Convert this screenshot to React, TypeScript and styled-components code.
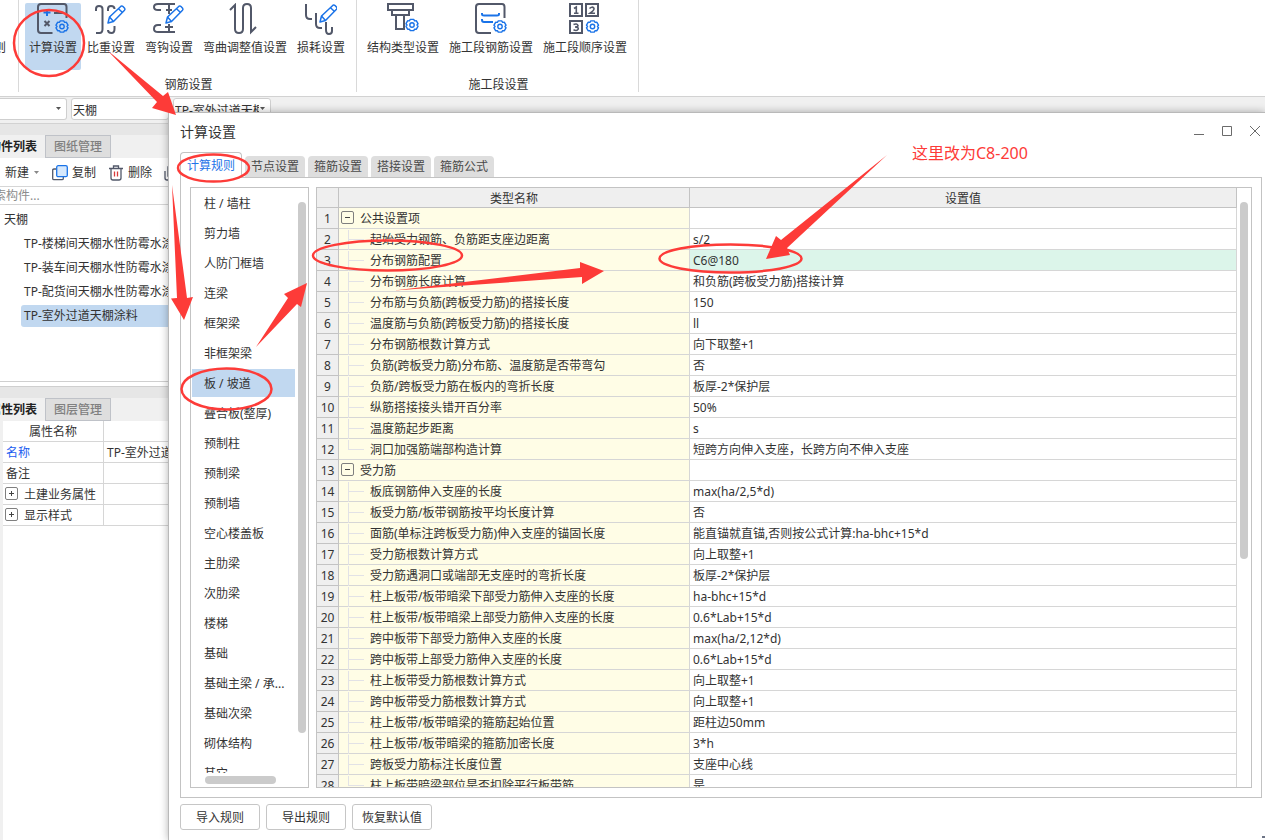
import React from "react";
import styled, { createGlobalStyle, css } from "styled-components";

const RED = "#fd3b38";
const INK = "#333333";
const LINE = "#c3c3c3";
const SOFT = "#d6d6d6";
const PICK = "#c1d8f0";

const Global = createGlobalStyle`
  * { box-sizing: border-box; }
  body { margin: 0; overflow: hidden; }
  body, button, input, select, table {
    font-family: "Noto Sans", "Noto Sans CJK SC", sans-serif;
    font-size: 12px;
    line-height: 20px;
    color: ${INK};
  }
  button { border: 0; padding: 0; margin: 0; background: none; white-space: nowrap; }
`;

const Page = styled.div`
  position: relative;
  height: 100vh;
  display: flex;
  flex-direction: column;
  overflow: hidden;
  background: #fff;
`;

/* ---------- ribbon ---------- */
const Ribbon = styled.header`
  display: flex;
  flex: none;
  height: 97px;
  padding-bottom: 4px;
  border-bottom: 1px solid #d2d2d2;
`;
const RibbonEdge = styled.div`
  display: flex;
  justify-content: flex-end;
  width: 19px;
  padding: 38px 12px 0 0;
  border-right: 1px solid #d9d9d9;
  white-space: nowrap;
`;
const Group = styled.section`
  display: flex;
  flex-direction: column;
  padding: 3px 7px 0 6px;
  border-right: 1px solid #d9d9d9;
`;
const GroupTools = styled.div`
  display: flex;
  gap: 2px;
`;
const Tool = styled.button<{ $on?: boolean }>`
  display: flex;
  flex-direction: column;
  align-items: center;
  height: 67px;
  padding: 0 4px;
  gap: 3px;
  border-radius: 2px;
  background: ${(p) => (p.$on ? PICK : "transparent")};
`;
const GroupTitle = styled.div`
  padding: 5px 0 0 3px;
  text-align: center;
`;

/* ---------- combo bar ---------- */
const ComboBar = styled.div`
  display: flex;
  flex: none;
  gap: 4px;
  height: 27px;
  padding-top: 1px;
  background: #f0f0f0;
  border-bottom: 1px solid #d2d2d2;
`;
const ComboBox = styled.label<{ $w: number; $first?: boolean }>`
  display: flex;
  align-items: center;
  width: ${(p) => p.$w}px;
  height: 22px;
  padding-right: 4px;
  background: #fff;
  border: 1px solid #cfcfcf;
  border-left-width: ${(p) => (p.$first ? 0 : 1)}px;
  border-radius: ${(p) => (p.$first ? "0 3px 3px 0" : "3px")};
`;
const ComboSelect = styled.select`
  flex: 1;
  min-width: 0;
  height: 20px;
  padding: 2px 0 0 1px;
  appearance: none;
  border: 0;
  background: none;
`;

/* ---------- left dock ---------- */
const Dock = styled.aside`
  display: flex;
  flex: 1;
  flex-direction: column;
  width: 170px;
  min-height: 0;
  overflow: hidden;
`;
const Band = styled.div`
  flex: none;
  height: 11px;
  background: #e6e6e6;
`;
const DockTabs = styled.div`
  display: flex;
  flex: none;
  height: 23px;
  background: #f0f0f0;
`;
const DockTab = styled.button<{ $on?: boolean }>`
  display: flex;
  justify-content: flex-end;
  align-items: center;
  overflow: hidden;
  width: ${(p) => (p.$on ? 45 : 66)}px;
  padding-right: 8px;
  font-weight: ${(p) => (p.$on ? 700 : 500)};
  color: ${(p) => (p.$on ? "#222" : "#808080")};
  background: ${(p) => (p.$on ? "#f0f0f0" : "#dedede")};
  ${(p) =>
    !p.$on &&
    css`
      border: 1px solid #bfc2c8;
    `}
`;
const DockTools = styled.div`
  display: flex;
  flex: none;
  align-items: center;
  height: 29px;
  padding: 2px 0 0 5px;
  border-bottom: 1px solid ${SOFT};
`;
const DockTool = styled.button`
  display: flex;
  flex: none;
  align-items: center;
  gap: 4px;
  margin-right: 12px;
`;
const Search = styled.input`
  flex: none;
  height: 18px;
  padding: 1px 0 0;
  border: 0;
  border-bottom: 1px solid ${SOFT};
  text-indent: -18px;
  &::placeholder { color: #8c8c8c; opacity: 1; }
`;
const Tree = styled.ul`
  flex: none;
  height: 177px;
  margin: 0;
  padding: 4px 0 0;
  list-style: none;
  white-space: nowrap;
  border-bottom: 1px solid #cfcfcf;
`;
const TreeRoot = styled.li`
  padding: 1px 0 3px 4px;
`;
const TreeLeaf = styled.li<{ $on?: boolean }>`
  height: 22px;
  margin: 0 0 2px 21px;
  padding: 0 3px;
  line-height: 22px;
  border-radius: 3px 0 0 3px;
  background: ${(p) => (p.$on ? PICK : "transparent")};
`;
const DockGap = styled.div`
  flex: none;
  height: 5px;
  border-bottom: 1px solid #cfcfcf;
`;
const PropsArea = styled.div`
  flex: 1;
  border-left: 3px solid #f0f0f0;
  overflow: hidden;
`;
const PropsTable = styled.table`
  width: 100%;
  table-layout: fixed;
  border-spacing: 0;
  line-height: 19px;
  td, th {
    height: 21px;
    padding: 1px 0 0 3px;
    font-weight: 400;
    overflow: hidden;
    white-space: nowrap;
    border-bottom: 1px solid ${SOFT};
    border-right: 1px solid ${SOFT};
  }
  th { padding-left: 0; }
`;
const NameCol = styled.col`
  width: 101px;
`;
const Link = styled.span`
  color: #1a5cf0;
`;
const Expandable = styled.div`
  display: flex;
  align-items: center;
  gap: 6px;
  height: 19px;
  margin-left: -1px;
`;
const Toggle = styled.button`
  display: flex;
  flex: none;
  width: 13px;
  height: 13px;
  margin-bottom: 2px;
  border: 1px solid #7f7f7f;
  border-radius: 2px;
`;

/* ---------- dialog ---------- */
const Dialog = styled.section`
  position: absolute;
  isolation: isolate;
  inset: 112px 0 0 168px;
  display: flex;
  flex-direction: column;
  padding: 0 3px 10px 11px;
  background: #fff;
  border: solid #b9b9b9;
  border-width: 1px 0 0 1px;
  box-shadow: 0 0 8px rgba(0, 0, 0, 0.3);
`;
const TitleBar = styled.div`
  display: flex;
  flex: none;
  justify-content: space-between;
  height: 39px;
`;
const Title = styled.h1`
  margin: 0;
  padding-top: 9px;
  font-size: 14px;
  font-weight: 400;
`;
const WindowButtons = styled.div`
  display: flex;
  gap: 16px;
  padding: 12px 1px 0 0;
`;
const WindowButton = styled.button`
  width: 12px;
  height: 12px;
`;
const Tabs = styled.div`
  display: flex;
  flex: none;
  align-items: flex-end;
  gap: 3px;
  height: 25px;
`;
const Tab = styled.button<{ $on?: boolean }>`
  position: relative;
  width: ${(p) => (p.$on ? 62 : 60)}px;
  height: ${(p) => (p.$on ? 26 : 21)}px;
  margin-bottom: ${(p) => (p.$on ? -1 : 0)}px;
  border-radius: 4px 4px 0 0;
  color: ${(p) => (p.$on ? "#1f74e8" : "#4a4a4a")};
  background: ${(p) => (p.$on ? "#fff" : "#dedede")};
  ${(p) =>
    p.$on &&
    css`
      z-index: 1;
      border: 1px solid ${LINE};
      border-bottom: 0;
    `}
`;
const Panel = styled.div`
  display: flex;
  flex: 1;
  gap: 7px;
  min-height: 0;
  padding: 9px;
  border: 1px solid ${LINE};
`;
const ListBox = styled.nav`
  display: grid;
  grid-template-columns: 1fr 13px;
  grid-template-rows: 1fr 14px;
  flex: none;
  width: 119px;
  border: 1px solid ${LINE};
`;
const List = styled.div`
  min-height: 0;
  overflow: hidden;
  padding: 1px 0 0 1px;
`;
const ListItem = styled.button<{ $on?: boolean }>`
  display: block;
  width: 100%;
  height: 28px;
  margin-bottom: 2px;
  padding: 2px 0 0 12px;
  text-align: left;
  background: ${(p) => (p.$on ? PICK : "transparent")};
`;
const Track = styled.div`
  flex: none;
  padding: 14px 0 0 3px;
`;
const GridTrack = styled(Track)`
  width: 14px;
`;
const Thumb = styled.div<{ $h: number }>`
  width: 8px;
  height: ${(p) => p.$h}%;
  border-radius: 4px;
  background: #cbcbcb;
`;
const TrackAcross = styled.div`
  padding: 3px 0 3px 14px;
`;
const ThumbAcross = styled.div`
  width: 71px;
  height: 8px;
  border-radius: 4px;
  background: #cbcbcb;
`;
const GridBox = styled.div`
  display: flex;
  flex: 1;
  min-width: 0;
  overflow: hidden;
  border: 1px solid ${LINE};
`;
const GridView = styled.div`
  flex: 1;
  min-width: 0;
  overflow: hidden;
`;
const Grid = styled.table`
  width: 100%;
  table-layout: fixed;
  border-spacing: 0;
  line-height: 19px;
`;
const Col = styled.col<{ $w?: number }>`
  width: ${(p) => (p.$w ? p.$w + "px" : "auto")};
`;
const HeadCell = styled.th`
  height: 20px;
  padding: 2px 0 0;
  line-height: 17px;
  font-weight: 400;
  background: #efefef;
  border: solid ${LINE};
  border-width: 0 1px 1px 0;
`;
const NumCell = styled.th`
  height: 21px;
  padding: 1px 0 0;
  font-weight: 400;
  background: #efefef;
  border: solid ${LINE};
  border-width: 0 1px 1px 0;
`;
const NameCell = styled.td`
  height: 21px;
  padding: 0;
  white-space: nowrap;
  background: #fffde6;
  border: solid ${SOFT};
  border-width: 0 1px 1px 0;
`;
const ValueCell = styled.td<{ $on?: boolean }>`
  height: 21px;
  padding: 1px 0 0 3px;
  white-space: nowrap;
  background: ${(p) => (p.$on ? "#dcf5ea" : "#fff")};
  border: solid ${SOFT};
  border-width: 0 1px 1px 0;
`;
const NameLine = styled.div<{ $child?: boolean }>`
  display: flex;
  align-items: center;
  gap: 6px;
  height: 20px;
  padding: 1px 0 0 ${(p) => (p.$child ? 9 : 2)}px;
`;
const Branch = styled.span<{ $last?: boolean }>`
  width: 16px;
  height: 20px;
  background:
    linear-gradient(#e2e2e6, #e2e2e6) 0 0 / 1px ${(p) => (p.$last ? "50%" : "100%")} no-repeat,
    linear-gradient(#e2e2e6, #e2e2e6) 0 9px / 100% 1px no-repeat;
`;
const Actions = styled.footer`
  display: flex;
  flex: none;
  gap: 6px;
  padding-top: 6px;
`;
const Action = styled.button`
  width: 80px;
  height: 26px;
  padding-top: 2px;
  border: 1px solid #c6c6c6;
  border-radius: 3px;
`;
const Grip = styled.span`
  position: absolute;
  right: 0;
  bottom: 2px;
  width: 3px;
  height: 2px;
  background: #6d7486;
`;

/* ---------- markup drawn over the window ---------- */
const Marks = styled.svg`
  position: absolute;
  top: 0;
  left: 0;
  pointer-events: none;
`;
const Note = styled.p`
  position: absolute;
  top: 141px;
  left: 912px;
  margin: 0;
  font-size: 16px;
  line-height: 24px;
  color: ${RED};
`;

/* ---------- icons ---------- */
const GREY = "#525869";
const BLUE = "#1a73e8";

const Svg = ({ children }: { children: React.ReactNode }) => (
  <svg width="32" height="32" viewBox="0 0 32 32" fill="none" stroke={GREY} strokeWidth="2">
    {children}
  </svg>
);
const Gear = ({ x, y }: { x: number; y: number }) => (
  <g transform={`translate(${x} ${y})`} stroke={BLUE} strokeWidth="1.4" strokeLinejoin="round">
    <path d="M-1.7 -5.6H1.7L2.6 -4.1L4.4 -4.2L6 -1.3L5 0L6 1.3L4.4 4.2L2.6 4.1L1.7 5.6H-1.7L-2.6 4.1L-4.4 4.2L-6 1.3L-5 0L-6 -1.3L-4.4 -4.2L-2.6 -4.1Z" />
    <circle r="2.2" />
  </g>
);
const Pencil = ({ x, y }: { x: number; y: number }) => (
  <g transform={`translate(${x} ${y})`} stroke={BLUE} strokeWidth="1.5" strokeLinejoin="round">
    <path d="M1 18L2.5 12L14 1.2Q15 .5 16 1.5L17.6 3.2Q18.4 4.2 17.5 5.2L6.5 16.5Z" fill="#fff" />
    <path d="M2.5 12L6.5 16.5M11.5 3.8L15.5 7.5" />
  </g>
);

const icons: Record<string, React.ReactNode> = {
  calc: (
    <Svg>
      <path d="M15.500 30H4Q1 30 1 27V4Q1 1 4 1H27Q29.500 1 29.500 4V15" />
      <path d="M10 6V13M6.500 9.500H13.500" stroke={BLUE} />
      <path d="M17 10H26" />
      <path d="M7.500 18L12.500 23M12.500 18L7.500 23" />
      <Gear x={25} y={23.5} />
    </Svg>
  ),
  weight: (
    <Svg>
      <path d="M1 8V6Q1 3 4 3Q7.500 3 7.500 6V26Q7.500 30 4.500 30H1M13 8V6Q13 3 16 3Q19.500 3 19.500 6M19.500 23V26Q19.500 30 16.500 30Q13 30 13 27" />
      <Pencil x={12} y={2} />
    </Svg>
  ),
  hook: (
    <Svg>
      <path d="M22 1H5Q1 1 1 4Q1 7 5 7H8M22 29H5Q1 29 1 26Q1 22 5 22H8M16 1V11M16 21V29M13 7H19M12 24H20" />
      <Pencil x={12} y={2} />
    </Svg>
  ),
  bend: (
    <Svg>
      <path d="M1 7L6 2V26Q6 30 10 30Q14 30 14 26V5Q14 1 18 1Q22 1 22 5V29L27 24" />
    </Svg>
  ),
  loss: (
    <Svg>
      <path d="M1 1V12Q1 16 5 16H7M11 10V21Q11 25 15 25H17M21 19V27Q21 31 24 31Q27 31 27 28V24" />
      <Pencil x={14} y={1} />
    </Svg>
  ),
  structure: (
    <Svg>
      <path d="M1 1H26V7H1ZM5 7H22V12H5ZM9 12H17V26H9Z" />
      <Gear x={25} y={22} />
    </Svg>
  ),
  bars: (
    <Svg>
      <path d="M16 30H4Q1 30 1 27V4Q1 1 4 1H27Q29.500 1 29.500 4V15" />
      <path d="M7 10V11Q7 12.500 9 12.500H22Q24 12.500 24 11V10M7 16V17Q7 19 9 19H18" stroke={BLUE} />
      <Gear x={25} y={23.5} />
    </Svg>
  ),
  order: (
    <Svg>
      <path d="M1 1H13V13H1ZM17 1H29V13H17ZM1 18H13V30H1Z" />
      <path strokeWidth="1.600" d="M5 5.500L7.300 4V10M5 10.300H9.500M20.500 5.500Q23 3 25 5.200Q25.500 7 21 10.200H26M4.500 21.500Q8 20 9 22.500Q9 24 6 24Q9.500 24 9.300 26Q8 28.500 4.500 26.800" />
      <Gear x={23.500} y={23.5} />
    </Svg>
  ),
};

const Caret = ({ color = "#555" }: { color?: string }) => (
  <svg width="7" height="4" viewBox="0 0 7 4">
    <path d="M1 0H6L3.500 3Z" fill={color} />
  </svg>
);
const PlusMinus = ({ plus }: { plus?: boolean }) => (
  <svg width="11" height="11" viewBox="0 0 11 11" stroke="#444">
    <path d={plus ? "M3 5.500H8M5.500 3V8" : "M3 5.500H8"} />
  </svg>
);

/* ---------- data ---------- */
type ToolDef = [icon: string, label: string];
const rebarTools: ToolDef[] = [
  ["calc", "计算设置"],
  ["weight", "比重设置"],
  ["hook", "弯钩设置"],
  ["bend", "弯曲调整值设置"],
  ["loss", "损耗设置"],
];
const sectionTools: ToolDef[] = [
  ["structure", "结构类型设置"],
  ["bars", "施工段钢筋设置"],
  ["order", "施工段顺序设置"],
];
const leaves = [
  "TP-楼梯间天棚水性防霉水涂料",
  "TP-装车间天棚水性防霉水涂料",
  "TP-配货间天棚水性防霉水涂料",
  "TP-室外过道天棚涂料",
];
const tabs = ["计算规则", "节点设置", "箍筋设置", "搭接设置", "箍筋公式"];
const members = [
  "柱 / 墙柱", "剪力墙", "人防门框墙", "连梁", "框架梁", "非框架梁", "板 / 坡道",
  "叠合板(整厚)", "预制柱", "预制梁", "预制墙", "空心楼盖板", "主肋梁", "次肋梁",
  "楼梯", "基础", "基础主梁 / 承...", "基础次梁", "砌体结构", "其它",
];
type Row = { name: string; value?: string; group?: boolean };
const rows: Row[] = [
  { name: "公共设置项", group: true },
  { name: "起始受力钢筋、负筋距支座边距离", value: "s/2" },
  { name: "分布钢筋配置", value: "C6@180" },
  { name: "分布钢筋长度计算", value: "和负筋(跨板受力筋)搭接计算" },
  { name: "分布筋与负筋(跨板受力筋)的搭接长度", value: "150" },
  { name: "温度筋与负筋(跨板受力筋)的搭接长度", value: "ll" },
  { name: "分布钢筋根数计算方式", value: "向下取整+1" },
  { name: "负筋(跨板受力筋)分布筋、温度筋是否带弯勾", value: "否" },
  { name: "负筋/跨板受力筋在板内的弯折长度", value: "板厚-2*保护层" },
  { name: "纵筋搭接接头错开百分率", value: "50%" },
  { name: "温度筋起步距离", value: "s" },
  { name: "洞口加强筋端部构造计算", value: "短跨方向伸入支座，长跨方向不伸入支座" },
  { name: "受力筋", group: true },
  { name: "板底钢筋伸入支座的长度", value: "max(ha/2,5*d)" },
  { name: "板受力筋/板带钢筋按平均长度计算", value: "否" },
  { name: "面筋(单标注跨板受力筋)伸入支座的锚固长度", value: "能直锚就直锚,否则按公式计算:ha-bhc+15*d" },
  { name: "受力筋根数计算方式", value: "向上取整+1" },
  { name: "受力筋遇洞口或端部无支座时的弯折长度", value: "板厚-2*保护层" },
  { name: "柱上板带/板带暗梁下部受力筋伸入支座的长度", value: "ha-bhc+15*d" },
  { name: "柱上板带/板带暗梁上部受力筋伸入支座的长度", value: "0.6*Lab+15*d" },
  { name: "跨中板带下部受力筋伸入支座的长度", value: "max(ha/2,12*d)" },
  { name: "跨中板带上部受力筋伸入支座的长度", value: "0.6*Lab+15*d" },
  { name: "柱上板带受力筋根数计算方式", value: "向上取整+1" },
  { name: "跨中板带受力筋根数计算方式", value: "向上取整+1" },
  { name: "柱上板带/板带暗梁的箍筋起始位置", value: "距柱边50mm" },
  { name: "柱上板带/板带暗梁的箍筋加密长度", value: "3*h" },
  { name: "跨板受力筋标注长度位置", value: "支座中心线" },
  { name: "柱上板带暗梁部位是否扣除平行板带筋", value: "是" },
];

const ToolGroup = ({ title, tools, active }: { title: string; tools: ToolDef[]; active?: string }) => (
  <Group>
    <GroupTools>
      {tools.map(([icon, label]) => (
        <Tool key={icon} $on={icon === active}>
          {icons[icon]}
          {label}
        </Tool>
      ))}
    </GroupTools>
    <GroupTitle>{title}</GroupTitle>
  </Group>
);

const Combo = ({ label, value, width, first, caret = true }: {
  label: string; value: string; width: number; first?: boolean; caret?: boolean;
}) => (
  <ComboBox $w={width} $first={first}>
    <ComboSelect aria-label={label}>
      <option>{value}</option>
    </ComboSelect>
    {caret && <Caret />}
  </ComboBox>
);

export default function App() {
  return (
    <Page>
      <Global />
      <Ribbon>
        <RibbonEdge>则</RibbonEdge>
        <ToolGroup title="钢筋设置" tools={rebarTools} active="calc" />
        <ToolGroup title="施工段设置" tools={sectionTools} />
      </Ribbon>

      <ComboBar>
        <Combo label="楼层" value="" width={67} first />
        <Combo label="构件类型" value="天棚" width={98} caret={false} />
        <Combo label="构件" value="TP-室外过道天棚涂料" width={98} />
      </ComboBar>

      <Dock>
        <Band />
        <DockTabs role="tablist">
          <DockTab role="tab" $on>构件列表</DockTab>
          <DockTab role="tab">图纸管理</DockTab>
        </DockTabs>
        <DockTools>
          <DockTool>
            新建
            <Caret color="#888" />
          </DockTool>
          <DockTool>
            <svg width="16" height="16" viewBox="0 0 16 16" fill="none">
              <path d="M4 4H2Q.7 4 .7 5.300V13.500Q.7 14.700 2 14.700H10Q11.300 14.700 11.300 13.500V12" stroke={GREY} strokeWidth="1.300" />
              <rect x="4.700" y=".7" width="10.600" height="11" rx="1.500" fill="#d6e8fc" stroke={BLUE} strokeWidth="1.300" />
            </svg>
            复制
          </DockTool>
          <DockTool>
            <svg width="16" height="16" viewBox="0 0 16 16" fill="none" stroke={GREY} strokeWidth="1.300">
              <path d="M1 3.500H15M5.500 3V1H10.500V3M3 3.500V13Q3 15 5 15H11Q13 15 13 13V3.500" />
              <path d="M6.500 6.500V11.500M9.500 6.500V11.500" stroke="#d93a3a" />
            </svg>
            删除
          </DockTool>
          <DockTool aria-label="层间复制">
            <svg width="16" height="16" viewBox="0 0 16 16" fill="none" stroke={GREY} strokeWidth="1.300">
              <path d="M1 6V13Q1 15 3 15H12M4 2V11H14V2Z" />
            </svg>
          </DockTool>
        </DockTools>
        <Search aria-label="搜索构件" placeholder="搜索构件..." />
        <Tree>
          <TreeRoot>天棚</TreeRoot>
          {leaves.map((leaf, i) => (
            <TreeLeaf key={leaf} $on={i === 3}>{leaf}</TreeLeaf>
          ))}
        </Tree>
        <DockGap />
        <Band />
        <DockTabs role="tablist">
          <DockTab role="tab" $on>属性列表</DockTab>
          <DockTab role="tab">图层管理</DockTab>
        </DockTabs>
        <PropsArea>
          <PropsTable>
            <colgroup>
              <NameCol />
              <col />
            </colgroup>
            <thead>
              <tr><th>属性名称</th><th /></tr>
            </thead>
            <tbody>
              <tr><td><Link>名称</Link></td><td>TP-室外过道天棚涂料</td></tr>
              <tr><td>备注</td><td /></tr>
              {["土建业务属性", "显示样式"].map((name) => (
                <tr key={name}>
                  <td>
                    <Expandable>
                      <Toggle aria-label={"展开" + name}><PlusMinus plus /></Toggle>
                      {name}
                    </Expandable>
                  </td>
                  <td />
                </tr>
              ))}
            </tbody>
          </PropsTable>
        </PropsArea>
      </Dock>

      <Dialog role="dialog" aria-labelledby="dialog-title">
        <TitleBar>
          <Title id="dialog-title">计算设置</Title>
          <WindowButtons>
            {[
              ["最小化", "M1 9.500H11"],
              ["最大化", "M1.500 1.500H10.500V10.500H1.500Z"],
              ["关闭", "M1 1L11 11M11 1L1 11"],
            ].map(([label, d]) => (
              <WindowButton key={label} aria-label={label}>
                <svg width="12" height="12" viewBox="0 0 12 12" fill="none" stroke="#6b6b6b" display="block">
                  <path d={d} />
                </svg>
              </WindowButton>
            ))}
          </WindowButtons>
        </TitleBar>
        <Tabs role="tablist">
          {tabs.map((tab, i) => (
            <Tab key={tab} role="tab" aria-selected={i === 0} $on={i === 0}>{tab}</Tab>
          ))}
        </Tabs>
        <Panel>
          <ListBox>
            <List>
              {members.map((m) => (
                <ListItem key={m} $on={m === "板 / 坡道"}>{m}</ListItem>
              ))}
            </List>
            <Track><Thumb $h={93} /></Track>
            <TrackAcross><ThumbAcross /></TrackAcross>
          </ListBox>
          <GridBox>
            <GridView>
              <Grid>
                <colgroup>
                  <Col $w={22} />
                  <Col $w={351} />
                  <Col />
                </colgroup>
                <thead>
                  <tr>
                    <HeadCell />
                    <HeadCell>类型名称</HeadCell>
                    <HeadCell>设置值</HeadCell>
                  </tr>
                </thead>
                <tbody>
                  {rows.map((row, i) => (
                    <tr key={row.name}>
                      <NumCell scope="row">{i + 1}</NumCell>
                      <NameCell>
                        <NameLine $child={!row.group}>
                          {row.group ? (
                            <Toggle aria-label={"折叠" + row.name}><PlusMinus /></Toggle>
                          ) : (
                            <Branch $last={i === rows.length - 1 || rows[i + 1].group} />
                          )}
                          {row.name}
                        </NameLine>
                      </NameCell>
                      <ValueCell $on={i === 2}>{row.value}</ValueCell>
                    </tr>
                  ))}
                </tbody>
              </Grid>
            </GridView>
            <GridTrack><Thumb $h={61} /></GridTrack>
          </GridBox>
        </Panel>
        <Actions>
          <Action>导入规则</Action>
          <Action>导出规则</Action>
          <Action>恢复默认值</Action>
        </Actions>
        <Grip />
      </Dialog>

      <Marks width="1265" height="840" viewBox="0 0 1265 840" fill={RED}>
        <g fill="none" stroke={RED} strokeWidth="2.500">
          <ellipse cx="49" cy="43" rx="35" ry="33" />
          <ellipse cx="213.500" cy="168" rx="35.500" ry="13.500" />
          <ellipse cx="387.500" cy="255.500" rx="74.500" ry="15" />
          <ellipse cx="730.500" cy="258.500" rx="71" ry="14" />
          <ellipse cx="226.500" cy="389" rx="45" ry="20.500" />
        </g>
        <path d="M107 50L163 96L168 92L176 115L152 108L157 102Z" />
        <path d="M172 185L187 298L193 297L184 320L171 298.500L177 298Z" />
        <path d="M256 347L288 298L284 294L307 283L301 307L297 304Z" />
        <path d="M394 290.500L580 268V262L604 271L582 284V277Z" />
        <path d="M887 155L781 240L776 236L766 259L790 255L787 248Z" />
      </Marks>
      <Note>这里改为C8-200</Note>
    </Page>
  );
}
